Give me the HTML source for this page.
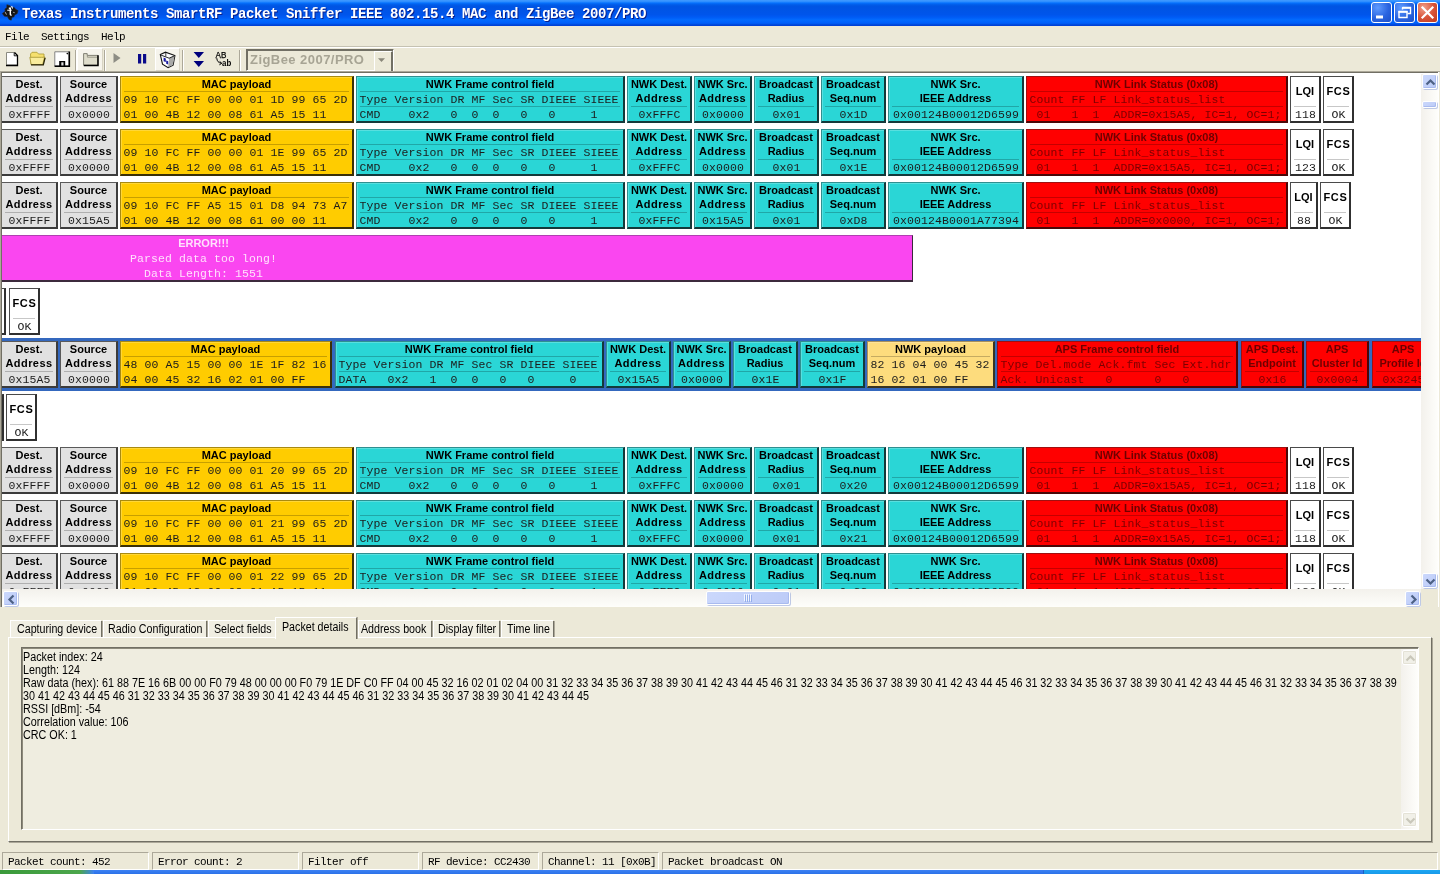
<!DOCTYPE html>
<html><head><meta charset="utf-8"><title>SmartRF Packet Sniffer</title>
<style>
html,body{margin:0;padding:0}
body{will-change:transform;width:1440px;height:874px;position:relative;overflow:hidden;background:#ECE9D8;font-family:"Liberation Sans",sans-serif;color:#000}
div,i,span{box-sizing:border-box}
.abs{position:absolute}
#title{position:absolute;left:0;top:0;width:1440px;height:26px;
 background:linear-gradient(180deg,#409AFF 0%,#3592FF 5%,#1880FF 9%,#0570FC 12%,#0262EE 16%,#0057E5 22%,#0054E3 26%,#0055EB 56%,#005BF5 66%,#026AFE 76%,#0061FC 86%,#0058F0 92%,#0047D8 95%,#003DD7 100%)}
#ttext{position:absolute;left:22px;top:5px;font:bold 14px/18px "Liberation Mono",monospace;letter-spacing:-.4px;color:#fff;white-space:pre;text-shadow:1px 1px 0 #0a1f8a}
.tb{position:absolute;top:2px;width:21px;height:21px;border:1px solid #fff;border-radius:3px;
 background:radial-gradient(circle at 30% 25%,#5f9bff 0%,#2a64e0 55%,#1c4fc8 100%)}
.tb.x{background:radial-gradient(circle at 30% 25%,#f0a08a 0%,#d9553a 50%,#c03a1e 100%)}
#menu{position:absolute;left:0;top:26px;width:1440px;height:20px;background:#ECE9D8}
.mono6{font:11px/14px "Liberation Mono",monospace;letter-spacing:-.6px;white-space:pre;color:#000}
#tool{position:absolute;left:0;top:46px;width:1440px;height:26px;background:#ECE9D8;border-top:1px solid #C5C2B2;box-shadow:inset 0 1px 0 #fff}
#area{position:absolute;left:2px;top:74px;width:1419px;height:515px;background:#fff;overflow:hidden}
.f{position:absolute;border-style:solid;border-width:1px 2px 2px 1px}
.g{background:#E1E1E1;border-color:#5a5a5a #3c3c3c #3c3c3c #5a5a5a}
.y{background:#FFCC00;border-color:#a88a10 #3a3008 #3a3008 #a88a10}
.c{background:#2AD6D6;border-color:#2f8f90 #14393a #14393a #2f8f90}
.o{background:#FDDC7D;border-color:#a8905a #3a3420 #3a3420 #a8905a}
.r{background:#FF0000;border-color:#a01010 #4a0808 #4a0808 #a01010;color:#7c0000}
.w{background:#fff;border-color:#4a4a4a #303030 #303030 #4a4a4a}
.m{background:#FA46F0;border-color:#b040b0 #3c2a3c #3c2a3c #fa46f0;color:#ffe0fc;border-width:1px 1px 2px 0}
.h{position:absolute;left:0;right:0;text-align:center;font:bold 11px/14px "Liberation Sans",sans-serif;white-space:pre}
.v{position:absolute;font:11.5px/15px "Liberation Mono",monospace;letter-spacing:.1px;white-space:pre}
.ad{letter-spacing:.45px}
.g .v,.y .v,.c .v,.o .v,.w .v{color:#1c1c1c}
.v.ce{left:0;right:0;text-align:center;padding-left:1px}
.v.le{left:2.5px}
.c,.y,.o{box-shadow:inset 1px 1px 0 rgba(255,255,255,.22)}
.ls{letter-spacing:.7px;padding-left:1px}
.d{position:absolute;left:3px;right:3px;height:1px;background:rgba(0,0,0,.22)}
.r .d{background:rgba(90,0,0,.35)}
.r .h{color:#6e0000}
.sel{position:absolute;background:#3468BE}

/* toolbar */
.sep{position:absolute;top:3px;width:2px;height:21px;border-left:1px solid #ACA899;border-right:1px solid #fff}
.tbtn{position:absolute;top:1px;height:23px;background:#F6F4EC;border:1px solid #fff;border-right-color:#d8d4c4;border-bottom-color:#d8d4c4}
#combo{position:absolute;left:246px;top:2px;width:148px;height:22px;border:1px solid;border-color:#716F64 #fff #fff #716F64;box-shadow:inset 1px 1px 0 #716F64;background:#ECE9D8}
#combo span{position:absolute;left:3px;top:2px;font:bold 13px/16px "Liberation Sans",sans-serif;letter-spacing:.45px;color:#A7A494;white-space:pre}
#combo b{position:absolute;right:0;top:1px;width:16px;height:19px;border-style:solid;border-width:1px 2px 2px 1px;border-color:#fff #716F64 #716F64 #fff;background:#ECE9D8}
/* tabs */
.tab{position:absolute;font:12px/14px "Liberation Sans",sans-serif;white-space:pre;transform:scaleX(.89);transform-origin:0 0;color:#000}
.tsep{position:absolute;top:621px;width:2px;height:16px;border-left:1px solid #716F64;border-right:1px solid #ACA899}
#det{position:absolute;left:21px;top:647px;width:1398px;height:183px;border:1px solid;border-color:#716F64 #fff #fff #716F64;box-shadow:inset 1px 1px 0 #8d8a7b;background:#EFEDE0}
#det .t{position:absolute;left:1px;top:3px;font:12px/13px "Liberation Sans",sans-serif;white-space:pre;transform:scaleX(.8975);transform-origin:0 0;color:#000}
.pan{position:absolute;top:852px;height:18px;border:1px solid;border-color:#ACA899 #fff #fff #ACA899}
/* scrollbars */
.trk{position:absolute;background:#F6F5F0}
.sb{position:absolute;background:linear-gradient(135deg,#CBD8FC,#BCCBF7);border:1px solid #fff;border-radius:2px;box-shadow:inset -1px -1px 0 #A9BBEF,1px 1px 0 rgba(140,160,215,.55)}
</style></head>
<body>
<div id="title"><div id="ttext">Texas Instruments SmartRF Packet Sniffer IEEE 802.15.4 MAC and ZigBee 2007/PRO</div><svg class="abs" style="left:1px;top:3px" width="19" height="19" viewBox="0 0 20 20"><path d="M6.2 1.8l3.3 1 .6 1.6 3.8.4 1.8 2 2.3 1.2-1 3.2-2.6 1.3-.8 2.2-2 .4-.8 3-2.4-.8-1.6-3-3.2-.4L1.4 11l3-2.2-.3-2.6 2-1.2z" fill="#161616" stroke="#2b2b2b" stroke-width=".6"/><path d="M8.2 5.5h1.6v6.2c0 1 .5 1.2 1.4 1" fill="none" stroke="#fff" stroke-width="1.5"/><path d="M6.6 7.6h4.6" stroke="#fff" stroke-width="1.1"/><path d="M11.2 3.2l1 2.6" stroke="#fff" stroke-width="1.1"/><path d="M4.4 9.6l1.4 2.6M12.8 9.8l1.6.4" stroke="#ddd" stroke-width=".8"/></svg><div class="tb" style="left:1371px"><svg width="19" height="19" viewBox="0 0 19 19"><path d="M4 12.5h7v3H4z" fill="#fff"/></svg></div><div class="tb" style="left:1394px"><svg width="19" height="19" viewBox="0 0 19 19"><path d="M7.5 4.5h8v6h-3M7.5 6.5v-2" fill="none" stroke="#fff" stroke-width="1.4"/><path d="M7 4.9h9" stroke="#fff" stroke-width="1.8"/><path d="M4 8.5h8v6h-8z" fill="none" stroke="#fff" stroke-width="1.4"/><path d="M3.5 8.9h9" stroke="#fff" stroke-width="1.8"/></svg></div><div class="tb x" style="left:1417px"><svg width="19" height="19" viewBox="0 0 19 19"><path d="M4.5 4.5l10 10M14.5 4.5l-10 10" stroke="#fff" stroke-width="2.2" stroke-linecap="square"/></svg></div></div>
<div id="menu"><div class="mono6 abs" style="left:5px;top:4px">File  Settings  Help</div></div>
<div id="tool"><div class="tbtn" style="left:77px;width:26px"></div><div class="tbtn" style="left:155px;width:25px"></div><i class="sep" style="left:75px"></i><i class="sep" style="left:104px"></i><i class="sep" style="left:182px"></i><i class="sep" style="left:239px"></i><svg class="abs" style="left:0;top:-1px" width="245" height="26" viewBox="0 46 245 26"><path d="M6.5 52.5h8l3 3v9.5h-11z" fill="#fff" stroke="#8a8a80" stroke-width="1"/><path d="M14.5 52.5l3 3v10h-11.5" fill="none" stroke="#000" stroke-width="1.3"/><path d="M14.2 52.8v3h3" fill="none" stroke="#000" stroke-width=".9"/><path d="M30.5 54l1.5-1.7h5l1.5 1.7h5.5v3H45l-2 7.5H31z" fill="#F6E06E" stroke="#b3a23c" stroke-width=".9"/><path d="M29.8 57.3h11.5l3.2 0-1.8 7.2H31.2z" fill="#F9EC9C" stroke="#a59433" stroke-width=".8"/><path d="M31 64.8h12.3l1.8-7" fill="none" stroke="#2a2608" stroke-width="1.3"/><path d="M54.8 51.8h14.4v14.2H54.8z" fill="#fff" stroke="#777" stroke-width=".9"/><path d="M69.3 51.5v14.8H54.6" fill="none" stroke="#000" stroke-width="1.6"/><path d="M59.2 61h6v5.5h-6z" fill="#000"/><path d="M61.3 62.3h2.2v3.2h-2.2z" fill="#ddd"/><circle cx="67.3" cy="53.6" r=".8" fill="#000"/><path d="M83.6 53.6h3.6v1.8h10.6v9.8H83.6z" fill="#DEDCCB" stroke="#77756a" stroke-width=".9"/><path d="M87.4 55.6v1.6h10" fill="none" stroke="#8c8a7c" stroke-width=".8"/><path d="M98 55.2v10.3H83.8" fill="none" stroke="#000" stroke-width="1.5"/><path d="M113.5 53l7 5-7 5z" fill="#8d8d84"/><path d="M138 54h3.2v9.6H138zM143 54h3.2v9.6H143z" fill="#0A0A8A"/><path d="M160.3 54.6l5.2-2.4 9.4 3.4-1.8 9.6-5 2.4-5.6-3.4z" fill="#fdfdfd" stroke="#111" stroke-width="1.1"/><path d="M169.2 58.2l5.4-2.4-1.7 9.2-4.7 2.3z" fill="#a9a9a9"/><path d="M160.8 55l8.3 3.2 5.6-2.5" fill="none" stroke="#111" stroke-width=".9"/><path d="M163.6 57.6l2.2.9v3.6l-2.2-.9zM166.2 60.4l2 .8v3.4l-2-.8z" fill="#1A1AA0"/><path d="M165.8 52.5v4" stroke="#111" stroke-width=".8"/><path d="M193.6 52h10.4l-5.2 6zM193.6 61h10.4l-5.2 6z" fill="#00007C"/><text x="215.5" y="57.8" font-family="Liberation Sans,sans-serif" font-size="8.5" fill="#000" stroke="#000" stroke-width=".25" textLength="10.8" lengthAdjust="spacingAndGlyphs">AB</text><text x="222" y="66.3" font-family="Liberation Sans,sans-serif" font-size="8.5" font-weight="bold" fill="#000" textLength="9.2" lengthAdjust="spacingAndGlyphs">ab</text><path d="M216.8 58.2c.2 3 1.6 4.6 4.6 5M219.6 61.4l2.2 1.9-2.4 1.5" fill="none" stroke="#000" stroke-width="1"/></svg><div id="combo"><span>ZigBee 2007/PRO</span><b><svg width="13" height="16" viewBox="0 0 13 16" style="position:absolute;left:0;top:0"><path d="M3 6.2h7l-3.5 3.8z" fill="#8a877a"/></svg></b></div></div>
<div class="abs" style="left:0;top:71px;width:1440px;height:536px;border-left:1px solid #ACA899;border-top:1px solid #ACA899"></div>
<div class="abs" style="left:1px;top:72px;width:1438px;height:535px;border-left:1px solid #716F64;border-top:1px solid #716F64;background:#fff"></div>
<div id="area">
<div class="f g" style="left:-1px;top:2px;width:57px;height:47px"><div class="h" style="top:0">Dest.</div><div class="h ad" style="top:14px">Address</div><i class="d" style="top:29px"></i><div class="v ce" style="top:30px">0xFFFF</div></div><div class="f g" style="left:58px;top:2px;width:58px;height:47px"><div class="h" style="top:0">Source</div><div class="h ad" style="top:14px">Address</div><i class="d" style="top:29px"></i><div class="v ce" style="top:30px">0x0000</div></div><div class="f y" style="left:118px;top:2px;width:234px;height:47px"><div class="h" style="top:0">MAC payload</div><i class="d" style="top:14px"></i><div class="v le" style="top:15px">09 10 FC FF 00 00 01 1D 99 65 2D</div><div class="v le" style="top:30px">01 00 4B 12 00 08 61 A5 15 11</div></div><div class="f c" style="left:354px;top:2px;width:269px;height:47px"><div class="h" style="top:0">NWK Frame control field</div><i class="d" style="top:14px"></i><div class="v le" style="top:15px">Type Version DR MF Sec SR DIEEE SIEEE</div><i class="d" style="top:29px"></i><div class="v le" style="top:30px">CMD    0x2   0  0  0   0   0     1</div></div><div class="f c" style="left:625px;top:2px;width:65px;height:47px"><div class="h" style="top:0">NWK Dest.</div><div class="h ad" style="top:14px">Address</div><i class="d" style="top:29px"></i><div class="v ce" style="top:30px">0xFFFC</div></div><div class="f c" style="left:692px;top:2px;width:58px;height:47px"><div class="h" style="top:0">NWK Src.</div><div class="h ad" style="top:14px">Address</div><i class="d" style="top:29px"></i><div class="v ce" style="top:30px">0x0000</div></div><div class="f c" style="left:752px;top:2px;width:65px;height:47px"><div class="h" style="top:0">Broadcast</div><div class="h" style="top:14px">Radius</div><i class="d" style="top:29px"></i><div class="v ce" style="top:30px">0x01</div></div><div class="f c" style="left:819px;top:2px;width:65px;height:47px"><div class="h" style="top:0">Broadcast</div><div class="h" style="top:14px">Seq.num</div><i class="d" style="top:29px"></i><div class="v ce" style="top:30px">0x1D</div></div><div class="f c" style="left:886px;top:2px;width:136px;height:47px"><div class="h" style="top:0">NWK Src.</div><div class="h" style="top:14px">IEEE Address</div><i class="d" style="top:29px"></i><div class="v ce" style="top:30px">0x00124B00012D6599</div></div><div class="f r" style="left:1024px;top:2px;width:262px;height:47px"><div class="h" style="top:0">NWK Link Status (0x08)</div><i class="d" style="top:14px"></i><div class="v le" style="top:15px">Count FF LF Link_status_list</div><i class="d" style="top:29px"></i><div class="v le" style="top:30px"> 01   1  1  ADDR=0x15A5, IC=1, OC=1;</div></div><div class="f w" style="left:1288px;top:2px;width:31px;height:47px"><div class="h" style="top:7px">LQI</div><i class="d" style="top:29px"></i><div class="v ce" style="top:30px">118</div></div><div class="f w" style="left:1321px;top:2px;width:31px;height:47px"><div class="h ls" style="top:7px">FCS</div><i class="d" style="top:29px"></i><div class="v ce" style="top:30px">OK</div></div>
<div class="f g" style="left:-1px;top:55px;width:57px;height:47px"><div class="h" style="top:0">Dest.</div><div class="h ad" style="top:14px">Address</div><i class="d" style="top:29px"></i><div class="v ce" style="top:30px">0xFFFF</div></div><div class="f g" style="left:58px;top:55px;width:58px;height:47px"><div class="h" style="top:0">Source</div><div class="h ad" style="top:14px">Address</div><i class="d" style="top:29px"></i><div class="v ce" style="top:30px">0x0000</div></div><div class="f y" style="left:118px;top:55px;width:234px;height:47px"><div class="h" style="top:0">MAC payload</div><i class="d" style="top:14px"></i><div class="v le" style="top:15px">09 10 FC FF 00 00 01 1E 99 65 2D</div><div class="v le" style="top:30px">01 00 4B 12 00 08 61 A5 15 11</div></div><div class="f c" style="left:354px;top:55px;width:269px;height:47px"><div class="h" style="top:0">NWK Frame control field</div><i class="d" style="top:14px"></i><div class="v le" style="top:15px">Type Version DR MF Sec SR DIEEE SIEEE</div><i class="d" style="top:29px"></i><div class="v le" style="top:30px">CMD    0x2   0  0  0   0   0     1</div></div><div class="f c" style="left:625px;top:55px;width:65px;height:47px"><div class="h" style="top:0">NWK Dest.</div><div class="h ad" style="top:14px">Address</div><i class="d" style="top:29px"></i><div class="v ce" style="top:30px">0xFFFC</div></div><div class="f c" style="left:692px;top:55px;width:58px;height:47px"><div class="h" style="top:0">NWK Src.</div><div class="h ad" style="top:14px">Address</div><i class="d" style="top:29px"></i><div class="v ce" style="top:30px">0x0000</div></div><div class="f c" style="left:752px;top:55px;width:65px;height:47px"><div class="h" style="top:0">Broadcast</div><div class="h" style="top:14px">Radius</div><i class="d" style="top:29px"></i><div class="v ce" style="top:30px">0x01</div></div><div class="f c" style="left:819px;top:55px;width:65px;height:47px"><div class="h" style="top:0">Broadcast</div><div class="h" style="top:14px">Seq.num</div><i class="d" style="top:29px"></i><div class="v ce" style="top:30px">0x1E</div></div><div class="f c" style="left:886px;top:55px;width:136px;height:47px"><div class="h" style="top:0">NWK Src.</div><div class="h" style="top:14px">IEEE Address</div><i class="d" style="top:29px"></i><div class="v ce" style="top:30px">0x00124B00012D6599</div></div><div class="f r" style="left:1024px;top:55px;width:262px;height:47px"><div class="h" style="top:0">NWK Link Status (0x08)</div><i class="d" style="top:14px"></i><div class="v le" style="top:15px">Count FF LF Link_status_list</div><i class="d" style="top:29px"></i><div class="v le" style="top:30px"> 01   1  1  ADDR=0x15A5, IC=1, OC=1;</div></div><div class="f w" style="left:1288px;top:55px;width:31px;height:47px"><div class="h" style="top:7px">LQI</div><i class="d" style="top:29px"></i><div class="v ce" style="top:30px">123</div></div><div class="f w" style="left:1321px;top:55px;width:31px;height:47px"><div class="h ls" style="top:7px">FCS</div><i class="d" style="top:29px"></i><div class="v ce" style="top:30px">OK</div></div>
<div class="f g" style="left:-1px;top:108px;width:57px;height:47px"><div class="h" style="top:0">Dest.</div><div class="h ad" style="top:14px">Address</div><i class="d" style="top:29px"></i><div class="v ce" style="top:30px">0xFFFF</div></div><div class="f g" style="left:58px;top:108px;width:58px;height:47px"><div class="h" style="top:0">Source</div><div class="h ad" style="top:14px">Address</div><i class="d" style="top:29px"></i><div class="v ce" style="top:30px">0x15A5</div></div><div class="f y" style="left:118px;top:108px;width:234px;height:47px"><div class="h" style="top:0">MAC payload</div><i class="d" style="top:14px"></i><div class="v le" style="top:15px">09 10 FC FF A5 15 01 D8 94 73 A7</div><div class="v le" style="top:30px">01 00 4B 12 00 08 61 00 00 11</div></div><div class="f c" style="left:354px;top:108px;width:269px;height:47px"><div class="h" style="top:0">NWK Frame control field</div><i class="d" style="top:14px"></i><div class="v le" style="top:15px">Type Version DR MF Sec SR DIEEE SIEEE</div><i class="d" style="top:29px"></i><div class="v le" style="top:30px">CMD    0x2   0  0  0   0   0     1</div></div><div class="f c" style="left:625px;top:108px;width:65px;height:47px"><div class="h" style="top:0">NWK Dest.</div><div class="h ad" style="top:14px">Address</div><i class="d" style="top:29px"></i><div class="v ce" style="top:30px">0xFFFC</div></div><div class="f c" style="left:692px;top:108px;width:58px;height:47px"><div class="h" style="top:0">NWK Src.</div><div class="h ad" style="top:14px">Address</div><i class="d" style="top:29px"></i><div class="v ce" style="top:30px">0x15A5</div></div><div class="f c" style="left:752px;top:108px;width:65px;height:47px"><div class="h" style="top:0">Broadcast</div><div class="h" style="top:14px">Radius</div><i class="d" style="top:29px"></i><div class="v ce" style="top:30px">0x01</div></div><div class="f c" style="left:819px;top:108px;width:65px;height:47px"><div class="h" style="top:0">Broadcast</div><div class="h" style="top:14px">Seq.num</div><i class="d" style="top:29px"></i><div class="v ce" style="top:30px">0xD8</div></div><div class="f c" style="left:886px;top:108px;width:136px;height:47px"><div class="h" style="top:0">NWK Src.</div><div class="h" style="top:14px">IEEE Address</div><i class="d" style="top:29px"></i><div class="v ce" style="top:30px">0x00124B0001A77394</div></div><div class="f r" style="left:1024px;top:108px;width:262px;height:47px"><div class="h" style="top:0">NWK Link Status (0x08)</div><i class="d" style="top:14px"></i><div class="v le" style="top:15px">Count FF LF Link_status_list</div><i class="d" style="top:29px"></i><div class="v le" style="top:30px"> 01   1  1  ADDR=0x0000, IC=1, OC=1;</div></div><div class="f w" style="left:1288px;top:108px;width:28px;height:47px"><div class="h" style="top:7px">LQI</div><i class="d" style="top:29px"></i><div class="v ce" style="top:30px">88</div></div><div class="f w" style="left:1318px;top:108px;width:31px;height:47px"><div class="h ls" style="top:7px">FCS</div><i class="d" style="top:29px"></i><div class="v ce" style="top:30px">OK</div></div>
<div class="f m" style="left:0;top:161px;width:911px;height:47px"><div class="h" style="top:0;left:0;width:403px">ERROR!!!</div><div class="v" style="top:15px;left:0;width:403px;text-align:center">Parsed data too long!</div><div class="v" style="top:30px;left:0;width:403px;text-align:center">Data Length: 1551</div></div>
<div class="f w" style="left:-4px;top:214px;width:8px;height:47px"></div>
<div class="f w" style="left:7px;top:214px;width:31px;height:47px"><div class="h ls" style="top:7px">FCS</div><i class="d" style="top:29px"></i><div class="v ce" style="top:30px">OK</div></div>
<div class="sel" style="left:0;top:264px;width:1419px;height:53px"></div><div class="f g" style="left:-1px;top:267px;width:57px;height:47px"><div class="h" style="top:0">Dest.</div><div class="h ad" style="top:14px">Address</div><i class="d" style="top:29px"></i><div class="v ce" style="top:30px">0x15A5</div></div><div class="f g" style="left:58px;top:267px;width:58px;height:47px"><div class="h" style="top:0">Source</div><div class="h ad" style="top:14px">Address</div><i class="d" style="top:29px"></i><div class="v ce" style="top:30px">0x0000</div></div><div class="f y" style="left:118px;top:267px;width:212px;height:47px"><div class="h" style="top:0">MAC payload</div><i class="d" style="top:14px"></i><div class="v le" style="top:15px">48 00 A5 15 00 00 1E 1F 82 16</div><div class="v le" style="top:30px">04 00 45 32 16 02 01 00 FF</div></div><div class="f c" style="left:333px;top:267px;width:269px;height:47px"><div class="h" style="top:0">NWK Frame control field</div><i class="d" style="top:14px"></i><div class="v le" style="top:15px">Type Version DR MF Sec SR DIEEE SIEEE</div><i class="d" style="top:29px"></i><div class="v le" style="top:30px">DATA   0x2   1  0  0   0   0     0</div></div><div class="f c" style="left:604px;top:267px;width:65px;height:47px"><div class="h" style="top:0">NWK Dest.</div><div class="h ad" style="top:14px">Address</div><i class="d" style="top:29px"></i><div class="v ce" style="top:30px">0x15A5</div></div><div class="f c" style="left:671px;top:267px;width:58px;height:47px"><div class="h" style="top:0">NWK Src.</div><div class="h ad" style="top:14px">Address</div><i class="d" style="top:29px"></i><div class="v ce" style="top:30px">0x0000</div></div><div class="f c" style="left:731px;top:267px;width:65px;height:47px"><div class="h" style="top:0">Broadcast</div><div class="h" style="top:14px">Radius</div><i class="d" style="top:29px"></i><div class="v ce" style="top:30px">0x1E</div></div><div class="f c" style="left:798px;top:267px;width:65px;height:47px"><div class="h" style="top:0">Broadcast</div><div class="h" style="top:14px">Seq.num</div><i class="d" style="top:29px"></i><div class="v ce" style="top:30px">0x1F</div></div><div class="f o" style="left:865px;top:267px;width:128px;height:47px"><div class="h" style="top:0">NWK payload</div><i class="d" style="top:14px"></i><div class="v le" style="top:15px">82 16 04 00 45 32</div><div class="v le" style="top:30px">16 02 01 00 FF</div></div><div class="f r" style="left:995px;top:267px;width:241px;height:47px"><div class="h" style="top:0">APS Frame control field</div><i class="d" style="top:14px"></i><div class="v le" style="top:15px">Type Del.mode Ack.fmt Sec Ext.hdr</div><i class="d" style="top:29px"></i><div class="v le" style="top:30px">Ack. Unicast   0      0   0</div></div><div class="f r" style="left:1239px;top:267px;width:63px;height:47px"><div class="h" style="top:0">APS Dest.</div><div class="h" style="top:14px">Endpoint</div><i class="d" style="top:29px"></i><div class="v ce" style="top:30px">0x16</div></div><div class="f r" style="left:1304px;top:267px;width:63px;height:47px"><div class="h" style="top:0">APS</div><div class="h" style="top:14px">Cluster Id</div><i class="d" style="top:29px"></i><div class="v ce" style="top:30px">0x0004</div></div><div class="f r" style="left:1370px;top:267px;width:63px;height:47px"><div class="h" style="top:0">APS</div><div class="h" style="top:14px">Profile Id</div><i class="d" style="top:29px"></i><div class="v ce" style="top:30px">0x3245</div></div>
<div class="f w" style="left:-4px;top:320px;width:6px;height:47px"></div>
<div class="f w" style="left:4px;top:320px;width:31px;height:47px"><div class="h ls" style="top:7px">FCS</div><i class="d" style="top:29px"></i><div class="v ce" style="top:30px">OK</div></div>
<div class="f g" style="left:-1px;top:373px;width:57px;height:47px"><div class="h" style="top:0">Dest.</div><div class="h ad" style="top:14px">Address</div><i class="d" style="top:29px"></i><div class="v ce" style="top:30px">0xFFFF</div></div><div class="f g" style="left:58px;top:373px;width:58px;height:47px"><div class="h" style="top:0">Source</div><div class="h ad" style="top:14px">Address</div><i class="d" style="top:29px"></i><div class="v ce" style="top:30px">0x0000</div></div><div class="f y" style="left:118px;top:373px;width:234px;height:47px"><div class="h" style="top:0">MAC payload</div><i class="d" style="top:14px"></i><div class="v le" style="top:15px">09 10 FC FF 00 00 01 20 99 65 2D</div><div class="v le" style="top:30px">01 00 4B 12 00 08 61 A5 15 11</div></div><div class="f c" style="left:354px;top:373px;width:269px;height:47px"><div class="h" style="top:0">NWK Frame control field</div><i class="d" style="top:14px"></i><div class="v le" style="top:15px">Type Version DR MF Sec SR DIEEE SIEEE</div><i class="d" style="top:29px"></i><div class="v le" style="top:30px">CMD    0x2   0  0  0   0   0     1</div></div><div class="f c" style="left:625px;top:373px;width:65px;height:47px"><div class="h" style="top:0">NWK Dest.</div><div class="h ad" style="top:14px">Address</div><i class="d" style="top:29px"></i><div class="v ce" style="top:30px">0xFFFC</div></div><div class="f c" style="left:692px;top:373px;width:58px;height:47px"><div class="h" style="top:0">NWK Src.</div><div class="h ad" style="top:14px">Address</div><i class="d" style="top:29px"></i><div class="v ce" style="top:30px">0x0000</div></div><div class="f c" style="left:752px;top:373px;width:65px;height:47px"><div class="h" style="top:0">Broadcast</div><div class="h" style="top:14px">Radius</div><i class="d" style="top:29px"></i><div class="v ce" style="top:30px">0x01</div></div><div class="f c" style="left:819px;top:373px;width:65px;height:47px"><div class="h" style="top:0">Broadcast</div><div class="h" style="top:14px">Seq.num</div><i class="d" style="top:29px"></i><div class="v ce" style="top:30px">0x20</div></div><div class="f c" style="left:886px;top:373px;width:136px;height:47px"><div class="h" style="top:0">NWK Src.</div><div class="h" style="top:14px">IEEE Address</div><i class="d" style="top:29px"></i><div class="v ce" style="top:30px">0x00124B00012D6599</div></div><div class="f r" style="left:1024px;top:373px;width:262px;height:47px"><div class="h" style="top:0">NWK Link Status (0x08)</div><i class="d" style="top:14px"></i><div class="v le" style="top:15px">Count FF LF Link_status_list</div><i class="d" style="top:29px"></i><div class="v le" style="top:30px"> 01   1  1  ADDR=0x15A5, IC=1, OC=1;</div></div><div class="f w" style="left:1288px;top:373px;width:31px;height:47px"><div class="h" style="top:7px">LQI</div><i class="d" style="top:29px"></i><div class="v ce" style="top:30px">118</div></div><div class="f w" style="left:1321px;top:373px;width:31px;height:47px"><div class="h ls" style="top:7px">FCS</div><i class="d" style="top:29px"></i><div class="v ce" style="top:30px">OK</div></div>
<div class="f g" style="left:-1px;top:426px;width:57px;height:47px"><div class="h" style="top:0">Dest.</div><div class="h ad" style="top:14px">Address</div><i class="d" style="top:29px"></i><div class="v ce" style="top:30px">0xFFFF</div></div><div class="f g" style="left:58px;top:426px;width:58px;height:47px"><div class="h" style="top:0">Source</div><div class="h ad" style="top:14px">Address</div><i class="d" style="top:29px"></i><div class="v ce" style="top:30px">0x0000</div></div><div class="f y" style="left:118px;top:426px;width:234px;height:47px"><div class="h" style="top:0">MAC payload</div><i class="d" style="top:14px"></i><div class="v le" style="top:15px">09 10 FC FF 00 00 01 21 99 65 2D</div><div class="v le" style="top:30px">01 00 4B 12 00 08 61 A5 15 11</div></div><div class="f c" style="left:354px;top:426px;width:269px;height:47px"><div class="h" style="top:0">NWK Frame control field</div><i class="d" style="top:14px"></i><div class="v le" style="top:15px">Type Version DR MF Sec SR DIEEE SIEEE</div><i class="d" style="top:29px"></i><div class="v le" style="top:30px">CMD    0x2   0  0  0   0   0     1</div></div><div class="f c" style="left:625px;top:426px;width:65px;height:47px"><div class="h" style="top:0">NWK Dest.</div><div class="h ad" style="top:14px">Address</div><i class="d" style="top:29px"></i><div class="v ce" style="top:30px">0xFFFC</div></div><div class="f c" style="left:692px;top:426px;width:58px;height:47px"><div class="h" style="top:0">NWK Src.</div><div class="h ad" style="top:14px">Address</div><i class="d" style="top:29px"></i><div class="v ce" style="top:30px">0x0000</div></div><div class="f c" style="left:752px;top:426px;width:65px;height:47px"><div class="h" style="top:0">Broadcast</div><div class="h" style="top:14px">Radius</div><i class="d" style="top:29px"></i><div class="v ce" style="top:30px">0x01</div></div><div class="f c" style="left:819px;top:426px;width:65px;height:47px"><div class="h" style="top:0">Broadcast</div><div class="h" style="top:14px">Seq.num</div><i class="d" style="top:29px"></i><div class="v ce" style="top:30px">0x21</div></div><div class="f c" style="left:886px;top:426px;width:136px;height:47px"><div class="h" style="top:0">NWK Src.</div><div class="h" style="top:14px">IEEE Address</div><i class="d" style="top:29px"></i><div class="v ce" style="top:30px">0x00124B00012D6599</div></div><div class="f r" style="left:1024px;top:426px;width:262px;height:47px"><div class="h" style="top:0">NWK Link Status (0x08)</div><i class="d" style="top:14px"></i><div class="v le" style="top:15px">Count FF LF Link_status_list</div><i class="d" style="top:29px"></i><div class="v le" style="top:30px"> 01   1  1  ADDR=0x15A5, IC=1, OC=1;</div></div><div class="f w" style="left:1288px;top:426px;width:31px;height:47px"><div class="h" style="top:7px">LQI</div><i class="d" style="top:29px"></i><div class="v ce" style="top:30px">118</div></div><div class="f w" style="left:1321px;top:426px;width:31px;height:47px"><div class="h ls" style="top:7px">FCS</div><i class="d" style="top:29px"></i><div class="v ce" style="top:30px">OK</div></div>
<div class="f g" style="left:-1px;top:479px;width:57px;height:47px"><div class="h" style="top:0">Dest.</div><div class="h ad" style="top:14px">Address</div><i class="d" style="top:29px"></i><div class="v ce" style="top:30px">0xFFFF</div></div><div class="f g" style="left:58px;top:479px;width:58px;height:47px"><div class="h" style="top:0">Source</div><div class="h ad" style="top:14px">Address</div><i class="d" style="top:29px"></i><div class="v ce" style="top:30px">0x0000</div></div><div class="f y" style="left:118px;top:479px;width:234px;height:47px"><div class="h" style="top:0">MAC payload</div><i class="d" style="top:14px"></i><div class="v le" style="top:15px">09 10 FC FF 00 00 01 22 99 65 2D</div><div class="v le" style="top:30px">01 00 4B 12 00 08 61 A5 15 11</div></div><div class="f c" style="left:354px;top:479px;width:269px;height:47px"><div class="h" style="top:0">NWK Frame control field</div><i class="d" style="top:14px"></i><div class="v le" style="top:15px">Type Version DR MF Sec SR DIEEE SIEEE</div><i class="d" style="top:29px"></i><div class="v le" style="top:30px">CMD    0x2   0  0  0   0   0     1</div></div><div class="f c" style="left:625px;top:479px;width:65px;height:47px"><div class="h" style="top:0">NWK Dest.</div><div class="h ad" style="top:14px">Address</div><i class="d" style="top:29px"></i><div class="v ce" style="top:30px">0xFFFC</div></div><div class="f c" style="left:692px;top:479px;width:58px;height:47px"><div class="h" style="top:0">NWK Src.</div><div class="h ad" style="top:14px">Address</div><i class="d" style="top:29px"></i><div class="v ce" style="top:30px">0x0000</div></div><div class="f c" style="left:752px;top:479px;width:65px;height:47px"><div class="h" style="top:0">Broadcast</div><div class="h" style="top:14px">Radius</div><i class="d" style="top:29px"></i><div class="v ce" style="top:30px">0x01</div></div><div class="f c" style="left:819px;top:479px;width:65px;height:47px"><div class="h" style="top:0">Broadcast</div><div class="h" style="top:14px">Seq.num</div><i class="d" style="top:29px"></i><div class="v ce" style="top:30px">0x22</div></div><div class="f c" style="left:886px;top:479px;width:136px;height:47px"><div class="h" style="top:0">NWK Src.</div><div class="h" style="top:14px">IEEE Address</div><i class="d" style="top:29px"></i><div class="v ce" style="top:30px">0x00124B00012D6599</div></div><div class="f r" style="left:1024px;top:479px;width:262px;height:47px"><div class="h" style="top:0">NWK Link Status (0x08)</div><i class="d" style="top:14px"></i><div class="v le" style="top:15px">Count FF LF Link_status_list</div><i class="d" style="top:29px"></i><div class="v le" style="top:30px"> 01   1  1  ADDR=0x15A5, IC=1, OC=1;</div></div><div class="f w" style="left:1288px;top:479px;width:31px;height:47px"><div class="h" style="top:7px">LQI</div><i class="d" style="top:29px"></i><div class="v ce" style="top:30px">126</div></div><div class="f w" style="left:1321px;top:479px;width:31px;height:47px"><div class="h ls" style="top:7px">FCS</div><i class="d" style="top:29px"></i><div class="v ce" style="top:30px">OK</div></div>
</div>
<div class="trk" style="left:1421px;top:74px;width:17px;height:515px;background:linear-gradient(90deg,#F3F1EC,#FEFEFB)"></div><div class="sb" style="left:1422px;top:74px;width:15px;height:15px"><svg width="15" height="15" viewBox="0 0 15 15" style="position:absolute;left:0;top:0"><path d="M3.5 9.5l4-4 4 4" fill="none" stroke="#4D6185" stroke-width="2.2"/></svg></div><div class="sb" style="left:1422px;top:573px;width:15px;height:15px"><svg width="15" height="15" viewBox="0 0 15 15" style="position:absolute;left:0;top:0"><path d="M3.5 5.5l4 4 4-4" fill="none" stroke="#4D6185" stroke-width="2.2"/></svg></div><div class="sb" style="left:1422px;top:101px;width:15px;height:7px"></div><div class="trk" style="left:2px;top:589px;width:1419px;height:18px;background:linear-gradient(180deg,#F3F1EC,#FEFEFB)"></div><div class="sb" style="left:3px;top:591px;width:15px;height:15px"><svg width="15" height="15" viewBox="0 0 15 15" style="position:absolute;left:0;top:0"><path d="M9.5 3.5l-4 4 4 4" fill="none" stroke="#4D6185" stroke-width="2.2"/></svg></div><div class="sb" style="left:1405px;top:591px;width:15px;height:15px"><svg width="15" height="15" viewBox="0 0 15 15" style="position:absolute;left:0;top:0"><path d="M5.5 3.5l4 4-4 4" fill="none" stroke="#4D6185" stroke-width="2.2"/></svg></div><div class="sb" style="left:706px;top:591px;width:84px;height:14px"><svg width="10" height="8" viewBox="0 0 10 8" style="position:absolute;left:37px;top:2px"><path d="M.5 0v7M2.5 0v7M4.5 0v7M6.5 0v7" stroke="#F2F6FF" stroke-width="1"/><path d="M1.5 1v7M3.5 1v7M5.5 1v7M7.5 1v7" stroke="#94AEEB" stroke-width="1"/></svg></div><div class="abs" style="left:1421px;top:589px;width:17px;height:18px;background:#ECE9D8"></div><div class="abs" style="left:1438px;top:72px;width:2px;height:535px;background:#ECE9D8;border-left:1px solid #fff"></div>
<div class="abs" style="left:8px;top:637px;width:1424px;height:205px;border:1px solid;border-color:#fff #716F64 #716F64 #fff;box-shadow:1px 1px 0 #ACA899"></div>
<div class="abs" style="left:10px;top:620px;width:91px;height:17px;background:#F0EEE2;border-top:1px solid #fff;border-left:1px solid #fff"></div>
<div class="abs" style="left:103px;top:620px;width:103px;height:17px;background:#F0EEE2;border-top:1px solid #fff;border-left:1px solid #fff"></div>
<div class="abs" style="left:208px;top:620px;width:67px;height:17px;background:#F0EEE2;border-top:1px solid #fff;border-left:1px solid #fff"></div>
<div class="abs" style="left:358px;top:620px;width:73px;height:17px;background:#F0EEE2;border-top:1px solid #fff;border-left:1px solid #fff"></div>
<div class="abs" style="left:433px;top:620px;width:66px;height:17px;background:#F0EEE2;border-top:1px solid #fff;border-left:1px solid #fff"></div>
<div class="abs" style="left:501px;top:620px;width:52px;height:17px;background:#F0EEE2;border-top:1px solid #fff;border-left:1px solid #fff"></div>
<div class="tab" style="left:16.5px;top:622px">Capturing device</div>
<div class="tab" style="left:108px;top:622px">Radio Configuration</div>
<div class="tab" style="left:213.5px;top:622px">Select fields</div>
<div class="tab" style="left:361px;top:622px">Address book</div>
<div class="tab" style="left:438px;top:622px">Display filter</div>
<div class="tab" style="left:507px;top:622px">Time line</div>
<i class="tsep" style="left:101px"></i>
<i class="tsep" style="left:206px"></i>
<i class="tsep" style="left:431px"></i>
<i class="tsep" style="left:499px"></i>
<i class="tsep" style="left:553px"></i>
<div class="abs" style="left:275px;top:617px;width:82px;height:22px;background:#ECE9D8;border:1px solid;border-color:#fff #716F64 #ECE9D8 #fff;border-bottom:none;box-shadow:1px 0 0 #ACA899"></div>
<div class="tab" style="left:282px;top:620px">Packet details</div>
<div id="det"><div class="t">Packet index: 24<br>Length: 124<br>Raw data (hex): 61 88 7E 16 6B 00 00 F0 79 48 00 00 00 F0 79 1E DF C0 FF 04 00 45 32 16 02 01 02 04 00 31 32 33 34 35 36 37 38 39 30 41 42 43 44 45 46 31 32 33 34 35 36 37 38 39 30 41 42 43 44 45 46 31 32 33 34 35 36 37 38 39 30 41 42 43 44 45 46 31 32 33 34 35 36 37 38 39<br>30 41 42 43 44 45 46 31 32 33 34 35 36 37 38 39 30 41 42 43 44 45 46 31 32 33 34 35 36 37 38 39 30 41 42 43 44 45<br>RSSI [dBm]: -54<br>Correlation value: 106<br>CRC OK: 1</div>
<div class="trk" style="left:1379px;top:1px;width:17px;height:180px;background:linear-gradient(90deg,#F3F1EC,#FEFEFB)"></div>
<div class="sb" style="left:1380px;top:2px;width:15px;height:15px;background:#F1F0E8;box-shadow:0 0 0 1px #E4E2D6 inset"><svg width="15" height="15" viewBox="0 0 15 15" style="position:absolute;left:0;top:0"><path d="M3.5 9.5l4-4 4 4" fill="none" stroke="#C9C7BA" stroke-width="2.2"/></svg></div>
<div class="sb" style="left:1380px;top:164px;width:15px;height:15px;background:#F1F0E8;box-shadow:0 0 0 1px #E4E2D6 inset"><svg width="15" height="15" viewBox="0 0 15 15" style="position:absolute;left:0;top:0"><path d="M3.5 5.5l4 4 4-4" fill="none" stroke="#C9C7BA" stroke-width="2.2"/></svg></div>
</div>
<div class="pan" style="left:2px;width:147px"><div class="mono6 abs" style="left:5px;top:2px">Packet count: 452</div></div>
<div class="pan" style="left:152px;width:147px"><div class="mono6 abs" style="left:5px;top:2px">Error count: 2</div></div>
<div class="pan" style="left:302px;width:117px"><div class="mono6 abs" style="left:5px;top:2px">Filter off</div></div>
<div class="pan" style="left:422px;width:117px"><div class="mono6 abs" style="left:5px;top:2px">RF device: CC2430</div></div>
<div class="pan" style="left:542px;width:117px"><div class="mono6 abs" style="left:5px;top:2px">Channel: 11 [0x0B]</div></div>
<div class="pan" style="left:662px;width:776px"><div class="mono6 abs" style="left:5px;top:2px">Packet broadcast ON</div></div>
<div class="abs" style="left:0;top:870px;width:1440px;height:4px;background:linear-gradient(180deg,#3C81F3,#2B71E8)"></div>
<div class="abs" style="left:1363px;top:870px;width:77px;height:4px;background:linear-gradient(180deg,#1CA6F2,#189AEA);border-left:1px solid #1F5FC0"></div>
<div class="abs" style="left:0;top:870px;width:94px;height:4px;background:linear-gradient(90deg,#3A9A3A,#4CA64C 85%,#3C81F3)"></div>
</body></html>
